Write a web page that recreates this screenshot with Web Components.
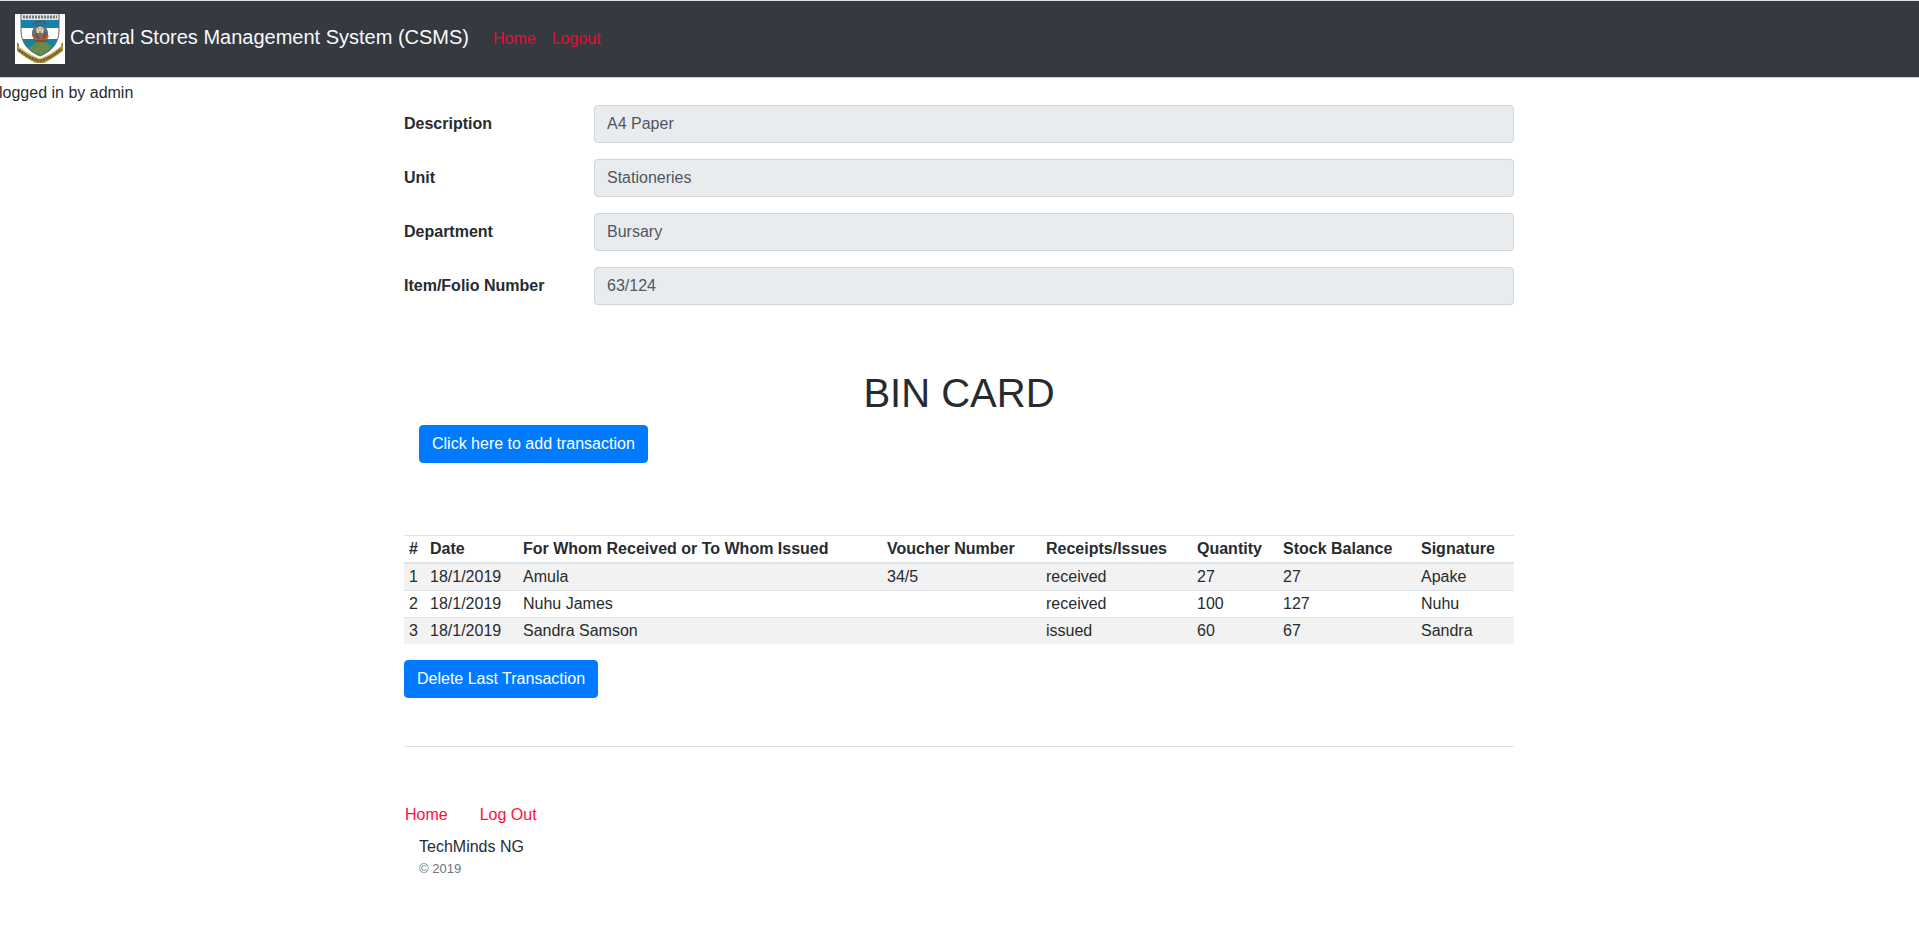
<!DOCTYPE html>
<html lang="en">
<head>
<meta charset="utf-8">
<title>Central Stores Management System (CSMS)</title>
<style>
body{margin:0;background:#fff;color:#272b2f;font:16px/24px "Liberation Sans",Arial,sans-serif}
main{max-width:1110px;margin:0 auto;padding:0 16px 0 15px}
.status{margin:3px 0 0 -1px}
h1{margin:64px 0 8px;font-size:40px;line-height:48px;font-weight:400;text-align:center}
.add{padding:0 15px;margin-bottom:72px}
</style>
</head>
<body>
<csms-navbar></csms-navbar>
<div class="status">logged in by admin</div>
<main>
<csms-field label="Description" value="A4 Paper"></csms-field>
<csms-field label="Unit" value="Stationeries"></csms-field>
<csms-field label="Department" value="Bursary"></csms-field>
<csms-field label="Item/Folio Number" value="63/124"></csms-field>
<h1>BIN CARD</h1>
<div class="add"><csms-button>Click here to add transaction</csms-button></div>
<csms-bin-table></csms-bin-table>
<csms-button>Delete Last Transaction</csms-button>
<csms-footer></csms-footer>
</main>
<script>
function define(name, html, setup) {
  const template = document.createElement('template');
  template.innerHTML = html;
  customElements.define(name, class extends HTMLElement {
    constructor() {
      super();
      this.attachShadow({mode: 'open'}).append(template.content.cloneNode(true));
    }
    connectedCallback() { if (setup) setup(this, this.shadowRoot); }
  });
}

define('csms-crest', `
<style>:host{display:block;width:50px;height:50px}svg{display:block;width:100%;height:100%}</style>
<svg viewBox="0 0 50 50" role="img" aria-label="University crest">
  <defs><clipPath id="c"><path d="M6 0H44V16C44 29 37 37 25 42C13 37 6 29 6 16Z"/></clipPath></defs>
  <rect width="50" height="50" fill="#fff"/>
  <g clip-path="url(#c)">
    <rect x="6" width="38" height="6" fill="#e4e4e2"/>
    <rect x="6" y="6" width="38" height="8" fill="#1681ab"/>
    <rect x="6" y="14" width="38" height="11" fill="#fff"/>
    <rect x="6" y="25" width="38" height="20" fill="#1681a0"/>
    <path d="M13 34L18 31L23 27L31 28L36 32L35 37L25 43Z" fill="#5d8b50"/>
    <path d="M16 35L22 29M20 38L27 29M25 40L32 31M22 27L33 35" stroke="#a5794a" stroke-width="1" stroke-dasharray="3 1"/>
  </g>
  <path d="M6 0V16C6 29 13 37 25 42C37 37 44 29 44 16V0" fill="none" stroke="#59666b"/>
  <path d="M8 3H42" stroke="#77767a" stroke-width="3" stroke-dasharray="2 1"/>
  <path d="M19 10Q25 5 31 10M21 12H29" fill="none" stroke="#4d5962" stroke-width="2"/>
  <circle cx="25" cy="20" r="8" fill="#8d5137"/>
  <path d="M17 19Q17 13 22 13Q28 10 32 15L33 20Q23 26 17 19Z" fill="#65737a"/>
  <path d="M21 15Q25 10 29 15L28 19H22Z" fill="#ded2bb"/>
  <path d="M23 15H24M26 15H27M25 17V19" stroke="#5c4b46" stroke-width="1"/>
  <path d="M17 20L22 24L30 20L34 22L31 27L20 27Z" fill="#b0593d"/>
  <path d="M21 19L24 25M31 18L28 25M20 27H31" stroke="#51453d" stroke-width="1"/>
  <path d="M2 28L4 30V33Q15 41 25 45Q36 41 46 32V30L48 28V37Q37 45 29 49H21Q12 45 2 37Z" fill="#a58a3e"/>
  <path d="M3 33Q14 42 25 45Q37 41 47 32" fill="none" stroke="#dfc87b" stroke-width="1"/>
  <path d="M4 36Q15 45 25 47Q36 44 46 35" fill="none" stroke="#65552a" stroke-width="2" stroke-dasharray="2 1"/>
</svg>`);

define('csms-navbar', `
<style>
:host{display:block;background:#343a40;border-top:1px solid #dee2e6;border-bottom:1px solid #ccc}
nav{display:flex;align-items:center;padding:13px 15px}
a{text-decoration:none}
.brand{display:flex;align-items:center;gap:5px;margin-right:24px;color:#f8f9fa;font-size:20px;line-height:24px}
.brand span{padding-bottom:4px}
.links{display:flex;gap:16px}
.links a{color:#e60c30}
</style>
<nav><a class="brand" href="#"><csms-crest></csms-crest><span>Central Stores Management System (CSMS)</span></a>
<div class="links"><a href="#">Home</a><a href="#">Logout</a></div></nav>`);

define('csms-field', `
<style>
:host{display:flex;align-items:center;margin-bottom:16px}
label{flex:0 0 190px;font-weight:700}
input{box-sizing:border-box;flex:1;min-width:0;height:38px;padding:6px 12px;border:1px solid #ced4da;border-radius:4px;background:#e9ecef;color:#50575e;font:inherit;opacity:1}
</style>
<label for="f"></label><input id="f" type="text" readonly>`, (el, root) => {
  root.querySelector('label').textContent = el.getAttribute('label');
  root.querySelector('input').value = el.getAttribute('value');
});

define('csms-button', `
<style>
:host{display:inline-block;vertical-align:top}
button{display:block;padding:6px 12px;border:1px solid #007bff;border-radius:4px;background:#007bff;color:#fff;font:inherit;cursor:pointer}
</style>
<button type="button"><slot></slot></button>`);

define('csms-bin-table', `
<style>
:host{display:block;margin-bottom:16px}
table{width:100%;table-layout:fixed;border-collapse:separate;border-spacing:0}
th,td{padding:1px 5px;text-align:left;white-space:nowrap}
th{border-top:1px solid #dee2e6;border-bottom:2px solid #dee2e6}
tr:nth-child(odd) td{background:#f2f2f2}
tr+tr td{border-top:1px solid #dee2e6}
</style>
<table>
<colgroup><col style="width:21px"><col style="width:93px"><col style="width:364px"><col style="width:159px"><col style="width:151px"><col style="width:86px"><col style="width:138px"><col style="width:98px"></colgroup>
<thead><tr><th>#</th><th>Date</th><th>For Whom Received or To Whom Issued</th><th>Voucher Number</th><th>Receipts/Issues</th><th>Quantity</th><th>Stock Balance</th><th>Signature</th></tr></thead>
<tbody>
<tr><td>1</td><td>18/1/2019</td><td>Amula</td><td>34/5</td><td>received</td><td>27</td><td>27</td><td>Apake</td></tr>
<tr><td>2</td><td>18/1/2019</td><td>Nuhu James</td><td></td><td>received</td><td>100</td><td>127</td><td>Nuhu</td></tr>
<tr><td>3</td><td>18/1/2019</td><td>Sandra Samson</td><td></td><td>issued</td><td>60</td><td>67</td><td>Sandra</td></tr>
</tbody></table>`);

define('csms-footer', `
<style>
:host{display:block;margin-top:48px;padding-top:56px;border-top:1px solid #dee2e6}
nav{display:flex;gap:32px;padding-left:1px;margin-bottom:8px}
a{color:#ff0f39;text-decoration:none}
div{padding-left:15px}
small{display:block;color:#6c757d;font-size:13px;line-height:20px}
</style>
<nav><a href="#">Home</a><a href="#">Log Out</a></nav>
<div>TechMinds NG<small>© 2019</small></div>`);
</script>
</body>
</html>
